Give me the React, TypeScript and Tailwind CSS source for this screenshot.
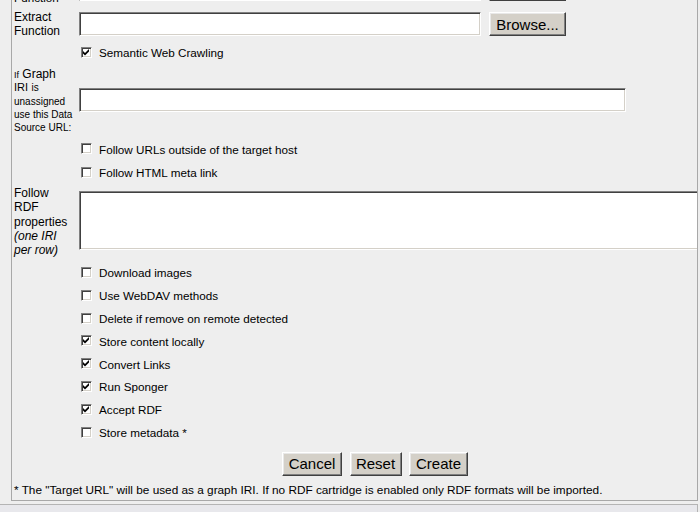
const inset =
  "border border-t-[#808080] border-l-[#808080] border-b-white border-r-white bg-white shadow-[inset_1px_1px_0_#404040,inset_-1px_-1px_0_#d4d0c8] outline-none";

const Btn = ({ label, w }: { label: string; w: string }) => (
  <button
    className={`${w} h-[24px] shrink-0 bg-[#d4d0c8] border border-t-white border-l-white border-b-[#404040] border-r-[#404040] shadow-[inset_-1px_-1px_0_#808080,inset_1px_1px_0_#e8e8e8] text-[15px] leading-none text-black`}
  >
    {label}
  </button>
);

const Check = ({ on, label, h = "h-[22.86px]" }: { on?: boolean; label: string; h?: string }) => (
  <div className={`flex items-center ${h}`}>
    <div className="w-[67px] shrink-0" />
    <div className="ml-[2px] w-[11px] h-[11px] shrink-0 flex items-center justify-center border border-t-[#808080] border-l-[#808080] border-b-white border-r-white bg-white shadow-[inset_1px_1px_0_#404040,inset_-1px_-1px_0_#d4d0c8]">
      {on && (
        <svg width="7" height="7" viewBox="0 0 7 7">
          <path d="M0 2 L2 4 L6 0 L6 2.6 L2 6.6 L0 4.6 Z" fill="#000" />
        </svg>
      )}
    </div>
    <span className="ml-[7px] mt-[1px] whitespace-nowrap">{label}</span>
  </div>
);

export default function App() {
  const lower = [
    { label: "Download images" },
    { label: "Use WebDAV methods" },
    { label: "Delete if remove on remote detected" },
    { label: "Store content locally", on: true },
    { label: "Convert Links", on: true },
    { label: "Run Sponger", on: true },
    { label: "Accept RDF", on: true },
    { label: "Store metadata *" },
  ];

  return (
    <div className="w-[700px] h-[512px] overflow-hidden bg-[#eeeeee] text-[11.7px] text-black font-['Liberation_Sans',Arial,sans-serif]">
      <div className="ml-[11px] w-[687px] border-l border-r border-b border-[#a8a8a8] pb-[3px] overflow-hidden">
        {/* row above, mostly scrolled out */}
        <div className="flex items-start mt-[-23px] h-[24px]">
          <div className="w-[67px] shrink-0 pl-[2px] pt-[14px] leading-[14px]">Function</div>
          <div className={`w-[402px] h-[24px] ${inset}`} />
          <div className="ml-[8px]">
            <Btn label="" w="w-[77px]" />
          </div>
        </div>

        <div className="flex items-start mt-[9px]">
          <div className="w-[67px] shrink-0 pl-[2px] leading-[14px] text-[12px]">
            Extract
            <br />
            Function
          </div>
          <input readOnly className={`mt-[2px] w-[402px] h-[24px] ${inset}`} />
          <div className="ml-[8px] mt-[2px]">
            <Btn label="Browse..." w="w-[77px]" />
          </div>
        </div>

        <div className="mt-[3px]">
          <Check on label="Semantic Web Crawling" h="h-[23px]" />
        </div>

        <div className="flex items-start mt-[4px]">
          <div className="w-[67px] shrink-0 pl-[2px] leading-[13.3px] text-[12px]">
            <span className="text-[9px] leading-[9px]">If</span> Graph
            <br />
            <span className="text-[11px] leading-[10px]">IRI</span>{" "}
            <span className="text-[10px] leading-[10px]">is</span>
            <br />
            <span className="text-[10px] leading-[10px]">unassigned</span>
            <br />
            <span className="text-[10px] leading-[10px]">use this Data</span>
            <br />
            <span className="text-[10px] leading-[10px]">Source URL:</span>
          </div>
          <input readOnly className={`mt-[20px] w-[547px] h-[24px] ${inset}`} />
        </div>

        <div className="mt-[2.5px]">
          <Check label="Follow URLs outside of the target host" h="h-[24px]" />
          <Check label="Follow HTML meta link" h="h-[23px]" />
        </div>

        <div className="flex items-start mt-[2px]">
          <div className="w-[67px] shrink-0 pl-[2px] leading-[14.3px] text-[12px]">
            Follow
            <br />
            RDF
            <br />
            properties
            <br />
            <i>(one IRI</i>
            <br />
            <i>per row)</i>
          </div>
          <textarea readOnly className={`mt-[5px] w-[640px] h-[59px] shrink-0 resize-none ${inset}`} />
        </div>

        <div className="mt-[3.5px]">
          {lower.map((c) => (
            <Check key={c.label} on={c.on} label={c.label} />
          ))}
        </div>

        <div className="flex mt-[8px] ml-[270px] gap-[7.5px]">
          <Btn label="Cancel" w="w-[60px]" />
          <Btn label="Reset" w="w-[52px]" />
          <Btn label="Create" w="w-[59px]" />
        </div>

        <div className="mt-[7px] pl-[2px] leading-[14px] text-[11.8px] whitespace-nowrap">
          * The "Target URL" will be used as a graph IRI. If no RDF cartridge is enabled only RDF formats will be imported.
        </div>
      </div>

      <div className="mt-[3px] w-[698px] h-[20px] border-t border-r border-[#b4b4b4] bg-[#e8e8ec]" />
    </div>
  );
}
